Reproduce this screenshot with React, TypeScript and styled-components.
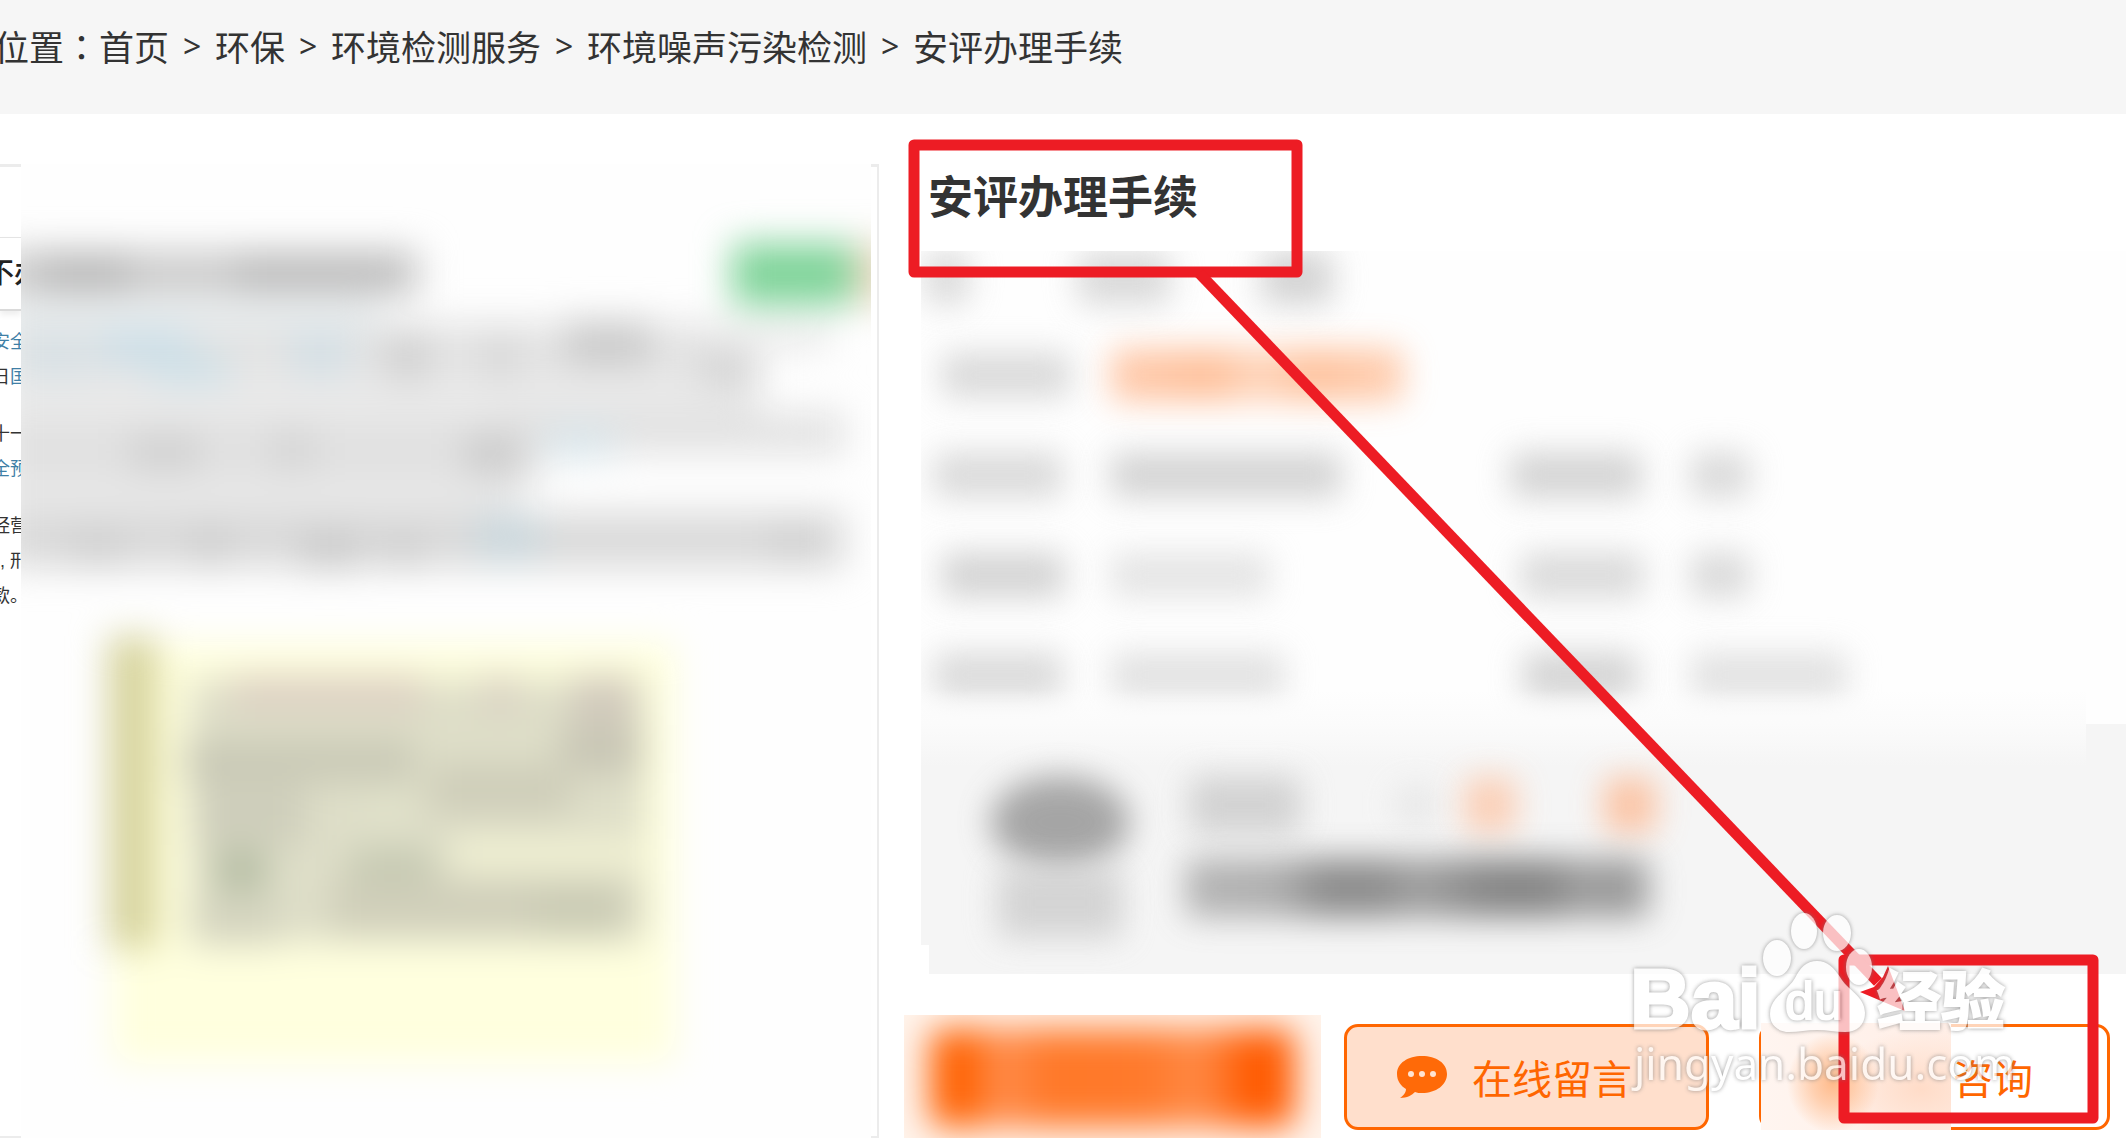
import React from "react";
import styled, { createGlobalStyle, css } from "styled-components";

const GlobalStyle = createGlobalStyle`
  *, *::before, *::after { box-sizing: border-box; }
  body {
    margin: 0;
    background: #fff;
    color: #333;
    font-family: "Liberation Sans", "Noto Sans CJK SC", sans-serif;
  }
`;

const Page = styled.div`
  position: relative;
  height: 100vh;
  overflow: hidden;
`;

const TopBar = styled.nav`
  height: 114px;
  padding-top: 19px;
  background: #f6f6f6;
  font-family: "Noto Sans CJK SC", sans-serif;
  font-size: 35px;
  line-height: 54px;
`;

const Crumbs = styled.ol`
  display: flex;
  margin: 0 0 0 -6px;
  padding: 0;
  list-style: none;
  white-space: nowrap;
`;

const Crumb = styled.li`
  display: flex;
`;

const Colon = styled.span`
  font-family: "Noto Sans CJK TC", sans-serif;
`;

const CrumbLink = styled.a`
  color: inherit;
  text-decoration: none;
`;

const Separator = styled.span`
  width: 46px;
  text-align: center;
  font-family: "Noto Sans", sans-serif;
  font-size: 32px;
`;

const Columns = styled.main`
  display: grid;
  grid-template-columns: minmax(0, 879fr) 25px minmax(0, 1222fr);
`;

const Gallery = styled.section`
  display: grid;
  grid-template-columns: 21px minmax(0, 1fr) 6px;
  height: 974px;
  margin-top: 50px;
  border-right: 2px solid #ececec;
`;

const GalleryEdge = styled.div`
  overflow: hidden;
  border-top: 3px solid #ececec;
  border-bottom: 2px solid #ececec;
`;

const DocumentHead = styled.div`
  height: 74px;
  margin-top: 70px;
  border-top: 1px solid #e4e4e4;
  border-bottom: 2px solid #dadada;
  box-shadow: 0 4px 6px #eee;
  font-size: 28px;
  line-height: 72px;
  font-weight: 500;
  color: #222;
  white-space: nowrap;
  text-indent: -14px;
`;

const DocumentText = styled.p`
  margin: 0;
  padding-top: 14px;
  font-size: 18px;
  line-height: 35px;
  color: #333;
  white-space: nowrap;

  & + & { padding-top: 22px; }
`;

const TextLine = styled.span<{ $blue?: boolean; $start?: boolean }>`
  display: block;
  margin-left: ${(p) => (p.$start ? "0" : "-8px")};
  color: ${(p) => (p.$blue ? "#3f7fa6" : "inherit")};
`;

const Blue = styled.span`
  color: #3f7fa6;
`;

const DocumentPicture = styled.svg`
  display: block;
  width: 100%;
  height: 100%;
  background: #fefefe;
`;

const Details = styled.section`
  grid-column: 3;
  padding-top: 50px;
`;

const Title = styled.h1`
  margin: 0;
  padding-left: 24px;
  height: 87px;
  font-family: "Noto Sans CJK SC", sans-serif;
  font-size: 45px;
  line-height: 62px;
  font-weight: 700;
`;

const Facts = styled.div`
  height: 473px;
  margin-left: 17px;
  overflow: hidden;
  background: #fefefe;
`;

const FactRow = styled.div<{ $first?: boolean }>`
  display: grid;
  grid-template-columns: 189px 400px 180px 1fr;
  align-items: center;
  height: 100px;
  ${(p) =>
    p.$first &&
    css`
      grid-template-columns: 156px 184px 1fr;
      height: 74px;
      padding-bottom: 40px;
    `}
`;

const Smudge = styled.div<{
  $w: number;
  $h?: number;
  $color?: string;
  $inset?: number;
  $round?: boolean;
}>`
  width: ${(p) => p.$w}px;
  height: ${(p) => p.$h ?? 46}px;
  margin-left: ${(p) => p.$inset ?? 0}px;
  background: ${(p) => p.$color ?? "#d0d0d0"};
  border-radius: ${(p) => (p.$round ? "50%" : "8px")};
  filter: blur(16px);
  opacity: 0.78;
`;

const Supplier = styled.div`
  position: relative;
  display: flex;
  gap: 55px;
  height: 250px;
  margin-left: 25px;
  padding: 52px 0 0 61px;
  background: #f5f5f5;

  &::before {
    content: "";
    position: absolute;
    inset: -34px 40px 29px -8px;
    background: linear-gradient(#fdfdfd00, #fbfbfb 34px, #f5f5f5 76px);
  }
`;

const SupplierBadge = styled.div`
  position: relative;
  width: 140px;
`;

const SupplierText = styled.div`
  position: relative;
`;

const SupplierLine = styled.div`
  display: flex;
  align-items: center;
  height: 58px;
  margin-bottom: 24px;
`;

const Actions = styled.div`
  display: flex;
  align-items: flex-start;
  padding-top: 41px;
`;

const PrimaryAction = styled.div`
  flex: none;
  width: 417px;
  height: 123px;
  margin-right: 23px;
  padding: 14px 26px;
  overflow: hidden;
  background: #fff4ec;
`;

const PrimaryFill = styled.div`
  height: 98px;
  border-radius: 14px;
  background: linear-gradient(90deg, #ff5f00 0, #ff6405 40px, #ff8f50 66px, #ff7828 120px, #ff7a2c 220px, #ff8b48 270px, #ff5a00 320px, #ff5a00 100%);
  filter: blur(17px);
`;

const Button = styled.button<{ $tinted?: boolean }>`
  position: relative;
  display: flex;
  align-items: center;
  justify-content: ${(p) => (p.$tinted ? "flex-start" : "flex-end")};
  gap: 25px;
  width: ${(p) => (p.$tinted ? 365 : 351)}px;
  height: 106px;
  margin: 9px 50px 0 0;
  padding: ${(p) => (p.$tinted ? "0 50px" : "0 74px")};
  border: 3px solid #ff6600;
  border-radius: 14px;
  background: ${(p) => (p.$tinted ? "#ffdfcc" : "#fff")};
  color: #ff6600;
  font-family: "Noto Sans CJK SC", sans-serif;
  font-size: 40px;
  line-height: 56px;
  white-space: nowrap;
  flex: none;
`;

const ButtonCover = styled.span`
  position: absolute;
  top: -4px;
  bottom: -3px;
  left: -1px;
  width: 190px;
  background:
    radial-gradient(ellipse 46px 50px at 72px 60px, #ffb27cdd, #ffb27c88 45%, #ffb27c00),
    radial-gradient(ellipse 90px 60px at 160px 66px, #ffdcc8, #ffdcc800),
    linear-gradient(90deg, #fff5f0, #ffeee6);
`;

const Overlay = styled.svg`
  position: absolute;
  top: 0;
  left: 0;
  width: 2126px;
  height: 1138px;
  pointer-events: none;
`;

const Watermark = styled.g`
  fill: #fff;
  opacity: 0.72;

  & > * {
    filter: drop-shadow(0 0 2px #777);
  }
`;

const trail = ["首页", "环保", "环境检测服务", "环境噪声污染检测", "安评办理手续"];

type Blob = [x: number, y: number, w: number, h: number, color: string];

const paragraphBlobs: Blob[] = [
  [0, 322, 730, 64, "#e4e4e4"],
  [700, 322, 130, 26, "#e8e8e8"],
  [0, 390, 760, 40, "#e8e8e8"],
  [0, 425, 540, 62, "#e1e1e1"],
  [0, 480, 520, 40, "#e9e9e9"],
  [500, 412, 345, 42, "#e2e2e2"],
  [0, 512, 845, 56, "#dadada"],
  [0, 250, 420, 46, "#cccccc"],
  [40, 254, 90, 38, "#b8b8b8"],
  [235, 254, 165, 38, "#bcbcbc"],
  [0, 305, 380, 22, "#e4eaec"],
  [100, 330, 90, 36, "#cddfe8"],
  [150, 355, 80, 30, "#cddfe6"],
  [20, 335, 70, 45, "#d8e1e5"],
  [290, 335, 60, 40, "#d3dfe5"],
  [385, 335, 45, 45, "#d0d0d0"],
  [480, 335, 40, 45, "#d8d8d8"],
  [565, 320, 85, 44, "#cacaca"],
  [700, 355, 60, 30, "#cfcfcf"],
  [130, 435, 70, 35, "#d0d0d0"],
  [270, 430, 45, 40, "#d5d5d5"],
  [465, 435, 55, 38, "#cacaca"],
  [545, 425, 70, 35, "#dae6eb"],
  [70, 535, 55, 30, "#cecece"],
  [190, 530, 40, 36, "#cecece"],
  [300, 535, 60, 34, "#c8c8c8"],
  [385, 540, 35, 26, "#c8c8c8"],
  [475, 515, 65, 46, "#cbd8dd"],
  [770, 525, 50, 35, "#d0d0d0"],
];

const noteBlobs: Blob[] = [
  [190, 680, 455, 262, "#dedec8"],
  [108, 636, 48, 312, "#d6d39c"],
  [232, 676, 190, 34, "#dccfc2"],
  [480, 676, 40, 36, "#dad2c3"],
  [572, 676, 62, 46, "#d1c9bc"],
  [184, 740, 230, 42, "#c9c9b6"],
  [560, 725, 82, 48, "#c8c6b5"],
  [430, 765, 140, 50, "#cecdb9"],
  [195, 785, 110, 60, "#cecebb"],
  [215, 850, 52, 42, "#b5bda4"],
  [350, 850, 85, 32, "#c4c8b1"],
  [190, 900, 90, 45, "#d4d4bf"],
  [330, 880, 300, 54, "#d0cfba"],
  [535, 890, 85, 45, "#cacbb4"],
  [450, 838, 190, 34, "#f2f2d4"],
  [370, 795, 35, 26, "#e2e4cb"],
];

const Blobs = ({ items }: { items: Blob[] }) => (
  <>
    {items.map(([x, y, w, h, color], i) => (
      <rect key={i} x={x} y={y} width={w} height={h} fill={color} />
    ))}
  </>
);

const BlurredDocument = () => (
  <DocumentPicture viewBox="21 164 850 974" preserveAspectRatio="none" aria-hidden="true">
    <defs>
      <filter id="soft" x="-20%" y="-20%" width="140%" height="140%" colorInterpolationFilters="sRGB">
        <feGaussianBlur stdDeviation="18" />
      </filter>
    </defs>
    <g filter="url(#soft)">
      <rect x="112" y="642" width="564" height="422" fill="#ffffde" />
      <Blobs items={paragraphBlobs} />
      <rect x="732" y="243" width="122" height="62" fill="#80d49a" />
      <rect x="854" y="243" width="44" height="62" fill="#f0dcc8" />
      <Blobs items={noteBlobs} />
    </g>
  </DocumentPicture>
);

const SpeechIcon = () => (
  <svg width="50" height="44" viewBox="0 0 50 44" aria-hidden="true">
    <path
      d="M25 1C11 1 0 8 0 19c0 7 4 12 9 15 0 4-3 7-6 9 7 0 12-3 15-6 2 1 5 1 7 1 14 0 25-8 25-19S39 1 25 1Z"
      fill="#ff6a08"
    />
    <g fill="#ffe3d2">
      <circle cx="14" cy="19" r="3" />
      <circle cx="25" cy="19" r="3" />
      <circle cx="36" cy="19" r="3" />
    </g>
  </svg>
);

const Annotations = () => (
  <Overlay viewBox="0 0 2126 1138" aria-hidden="true">
    <g fill="none" stroke="#ed1c24" strokeWidth="11" strokeLinejoin="round">
      <rect x="914" y="145" width="383" height="127" />
      <rect x="1844" y="960" width="249" height="158" />
      <path d="M1199 273 1878 982" />
    </g>
    <path d="M1905 1011 1888 966 1883 977 1874 987 1860 992Z" fill="#ed1c24" />
    <Watermark>
      <ellipse cx="1777" cy="958" rx="14" ry="18" />
      <ellipse cx="1804" cy="931" rx="13" ry="18" />
      <ellipse cx="1837" cy="933" rx="14" ry="18" />
      <ellipse cx="1859" cy="967" rx="13" ry="18" />
      <path d="M1817 961c-11 0-17 7-22 17-7 13-25 19-25 36 0 12 9 18 19 18 10 0 18-2 28-2s18 2 28 2c12 0 20-7 20-19 0-17-18-23-25-36-6-9-12-16-23-16Z" />
      <text x="1630" y="1028" fontSize="84" fontWeight="700" fontFamily='"Liberation Sans", sans-serif' stroke="#fff" strokeWidth="3">
        Bai
      </text>
      <text x="1785" y="1019" fontSize="52" fontWeight="400" fontFamily='"Liberation Sans", sans-serif' stroke="#fff" strokeWidth="2">
        du
      </text>
      <text x="1877" y="1024" fontSize="64" fontWeight="700" fontFamily='"Noto Sans CJK SC", sans-serif' stroke="#fff" strokeWidth="2">
        经验
      </text>
      <text x="1634" y="1080" fontSize="44" fontFamily='"Noto Sans", sans-serif'>
        jingyan.baidu.com
      </text>
    </Watermark>
  </Overlay>
);

export default function App() {
  return (
    <>
      <GlobalStyle />
      <Page>
        <TopBar aria-label="位置">
          <Crumbs>
            <Crumb>
              位置<Colon lang="zh-TW">：</Colon>
            </Crumb>
            {trail.map((name, i) => (
              <Crumb key={name}>
                {i > 0 && <Separator>&gt;</Separator>}
                <CrumbLink href="#">{name}</CrumbLink>
              </Crumb>
            ))}
          </Crumbs>
        </TopBar>

        <Columns>
          <Gallery>
            <GalleryEdge>
              <DocumentHead>不办</DocumentHead>
              <DocumentText>
                <TextLine $blue>安全</TextLine>
                <TextLine>
                  日<Blue>国</Blue>
                </TextLine>
              </DocumentText>
              <DocumentText>
                <TextLine>十一</TextLine>
                <TextLine $blue>全预</TextLine>
              </DocumentText>
              <DocumentText>
                <TextLine>经营</TextLine>
                <TextLine $start>, 刑</TextLine>
                <TextLine>款。</TextLine>
              </DocumentText>
            </GalleryEdge>
            <BlurredDocument />
            <GalleryEdge />
          </Gallery>

          <Details>
            <Title>安评办理手续</Title>
            <Facts>
              <FactRow $first>
                <Smudge $w={44} $h={54} $inset={4} />
                <Smudge $w={94} $h={54} />
                <Smudge $w={72} $h={54} $color="#c8c8c8" />
              </FactRow>
              <FactRow>
                <Smudge $w={130} $inset={20} />
                <Smudge $w={294} $h={54} $color="linear-gradient(90deg,#ffbf9a,#ffb080 35%,#ffccac 50%,#ffb283 68%,#ffc4a0)" />
              </FactRow>
              <FactRow>
                <Smudge $w={130} $inset={12} />
                <Smudge $w={232} $color="#c8c8c8" />
                <Smudge $w={132} $color="#c8c8c8" />
                <Smudge $w={60} />
              </FactRow>
              <FactRow>
                <Smudge $w={124} $inset={20} $color="#c8c8c8" />
                <Smudge $w={160} $color="#dedede" />
                <Smudge $w={124} $inset={10} />
                <Smudge $w={60} />
              </FactRow>
              <FactRow>
                <Smudge $w={130} $inset={12} />
                <Smudge $w={175} $color="#dadada" />
                <Smudge $w={116} $inset={12} $color="#c8c8c8" />
                <Smudge $w={158} $color="#dadada" />
              </FactRow>
            </Facts>

            <Supplier>
              <SupplierBadge>
                <Smudge $w={140} $h={92} $color="#8f8f8f" $round />
                <Smudge $w={126} $h={70} $color="#cbcbcb" $inset={7} />
              </SupplierBadge>
              <SupplierText>
                <SupplierLine>
                  <Smudge $w={112} $h={58} $color="#c8c8c8" $inset={4} />
                  <Smudge $w={40} $h={36} $color="#e2e2e2" $inset={95} />
                  <Smudge $w={52} $h={56} $color="#fdc4a4" $inset={28} />
                  <Smudge $w={52} $h={56} $color="#fdb68e" $inset={88} />
                </SupplierLine>
                <Smudge $w={466} $h={60} $color="linear-gradient(90deg,#a4a4a4,#9c9c9c 20%,#707070 30%,#717171 42%,#8a8a8a 50%,#686868 65%,#686868 78%,#8c8c8c 86%,#7c7c7c 92%,#9a9a9a)" />
              </SupplierText>
            </Supplier>

            <Actions>
              <PrimaryAction>
                <PrimaryFill />
              </PrimaryAction>
              <Button type="button" $tinted>
                <SpeechIcon />
                在线留言
              </Button>
              <Button type="button">
                <ButtonCover />
                咨询
              </Button>
            </Actions>
          </Details>
        </Columns>
        <Annotations />
      </Page>
    </>
  );
}
